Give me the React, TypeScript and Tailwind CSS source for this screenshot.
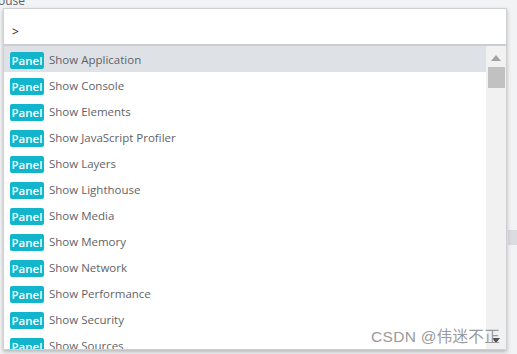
import React from 'react';

const commands = [
  'Show Application',
  'Show Console',
  'Show Elements',
  'Show JavaScript Profiler',
  'Show Layers',
  'Show Lighthouse',
  'Show Media',
  'Show Memory',
  'Show Network',
  'Show Performance',
  'Show Security',
  'Show Sources',
];

function Row({ label, active }: { label: string; active: boolean }) {
  return (
    <div className={`h-[26px] shrink-0 flex items-center pl-[6px] pt-[2px] ${active ? 'bg-[#dee1e6]' : ''}`}>
      <span className="h-[17px] w-[34px] text-center rounded-[2px] bg-[#12b5cb] text-white font-semibold text-[11.5px] leading-[17px]">
        Panel
      </span>
      <span className="ml-[5px] text-[11.5px] text-[#5f6368]">{label}</span>
    </div>
  );
}

export default function App() {
  return (
    <div
      className="relative w-[517px] h-[354px] overflow-hidden bg-[#f1f3f4]"
      style={{ fontFamily: '"Open Sans", "Noto Sans", sans-serif' }}
    >
      {/* page behind the overlay */}
      <div className="absolute -top-[8px] -left-[2px] text-[12px] text-[#5f6368]">ouse</div>
      <div className="absolute top-[230px] left-[508px] w-[10px] h-[15px] bg-[#dadce0]" />

      {/* command menu */}
      <div className="absolute left-[3px] top-[8px] w-[504px] h-[342px] bg-white border border-[#d0d0d0] shadow-[0_2px_4px_rgba(0,0,0,0.25)] flex flex-col">
        <div className="h-[35px] shrink-0 flex items-center pl-[8px] pt-[10px] text-[12px] text-[#202124]">&gt;</div>
        <div className="h-[2px] shrink-0 bg-[#cacdd1]" />
        <div className="flex-1 flex min-h-0">
          <div className="flex-1 flex flex-col overflow-hidden">
            {commands.map((c, i) => (
              <Row key={c} label={c} active={i === 0} />
            ))}
          </div>
          <div className="w-[20px] bg-[#f1f1f1] flex flex-col items-center relative">
            <svg width="10" height="6" viewBox="0 0 10 6" className="mt-[9px]">
              <path d="M5 0 L10 6 L0 6 Z" fill="#a3a3a3" />
            </svg>
            <div className="mt-[6px] w-[17px] h-[21px] bg-[#c1c1c1]" />
            <svg width="8" height="5" viewBox="0 0 8 5" className="absolute bottom-[6px]">
              <path d="M0 0 L8 0 L4 5 Z" fill="#505050" />
            </svg>
          </div>
        </div>
      </div>

      {/* watermark */}
      <div
        className="absolute left-[371px] top-[325px] text-[15.5px] text-[#9a9a9a] tracking-[0.3px]"
        style={{ fontFamily: '"Liberation Sans", "Noto Sans CJK SC", sans-serif' }}
      >
        CSDN @伟迷不正
      </div>
    </div>
  );
}
